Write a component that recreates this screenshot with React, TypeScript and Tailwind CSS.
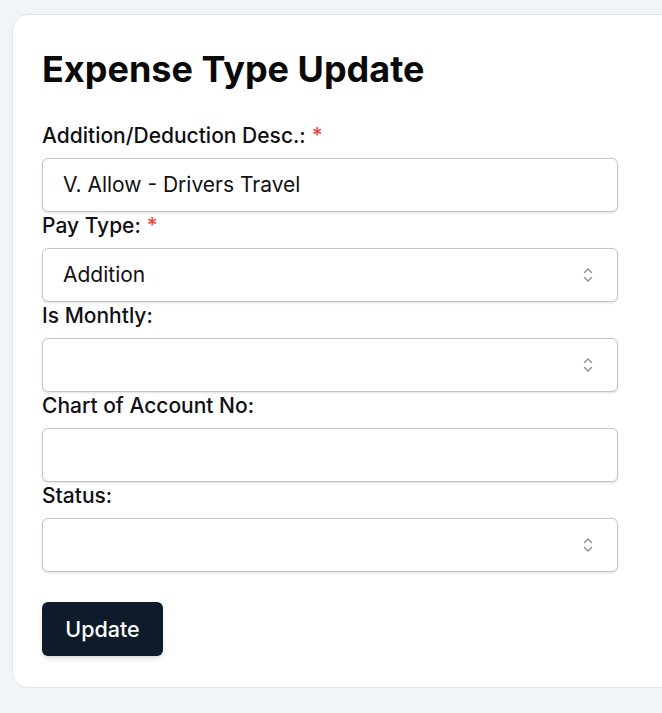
import type { ReactNode } from "react"

function Chevrons() {
  return (
    <svg width="10" height="16" viewBox="0 0 10 16" fill="none" stroke="#8a8a8a" strokeWidth="1.3" strokeLinecap="round" strokeLinejoin="round">
      <path d="M1.5 5.5 5 2l3.5 3.5" />
      <path d="M1.5 10.5 5 14l3.5-3.5" />
    </svg>
  )
}

function Field({ label, required, children }: { label: string; required?: boolean; children: ReactNode }) {
  return (
    <div className="flex flex-col">
      <label className="text-[21px] font-medium leading-7 text-[#0f0f14] mb-2">
        {label}
        {required && <span className="text-[#ef4444] ml-1.5">*</span>}
      </label>
      {children}
    </div>
  )
}

function TextBox({ value }: { value?: string }) {
  return (
    <div className="h-[54px] w-[576px] rounded-md border border-[#c4c4c8] bg-white shadow-sm flex items-center px-5 text-[21px] text-[#111111]">
      {value}
    </div>
  )
}

function SelectBox({ value }: { value?: string }) {
  return (
    <div className="h-[54px] w-[576px] rounded-md border border-[#c4c4c8] bg-white shadow-sm flex items-center justify-between pl-5 pr-6 text-[21px] text-[#111111]">
      <span>{value}</span>
      <Chevrons />
    </div>
  )
}

export default function App() {
  return (
    <div className="min-h-screen bg-[#f1f4f8] pt-[14px] pl-[12px] overflow-hidden" style={{ fontFamily: "Inter, 'Noto Sans', sans-serif" }}>
      <div className="w-[700px] bg-white rounded-2xl border border-[#e2e6eb] px-[29px] pt-[34px] pb-[31px]">
        <h1 className="text-[36px] font-bold leading-10 text-[#0a0a0a] mb-[33px]">Expense Type Update</h1>
        <Field label="Addition/Deduction Desc.:" required>
          <TextBox value="V. Allow - Drivers Travel" />
        </Field>
        <Field label="Pay Type:" required>
          <SelectBox value="Addition" />
        </Field>
        <Field label="Is Monhtly:">
          <SelectBox />
        </Field>
        <Field label="Chart of Account No:">
          <TextBox />
        </Field>
        <Field label="Status:">
          <SelectBox />
        </Field>
        <button className="mt-[30px] h-[54px] w-[121px] rounded-md bg-[#0d1b2a] text-white text-[21.5px] font-medium shadow-md">
          Update
        </button>
      </div>
    </div>
  )
}
